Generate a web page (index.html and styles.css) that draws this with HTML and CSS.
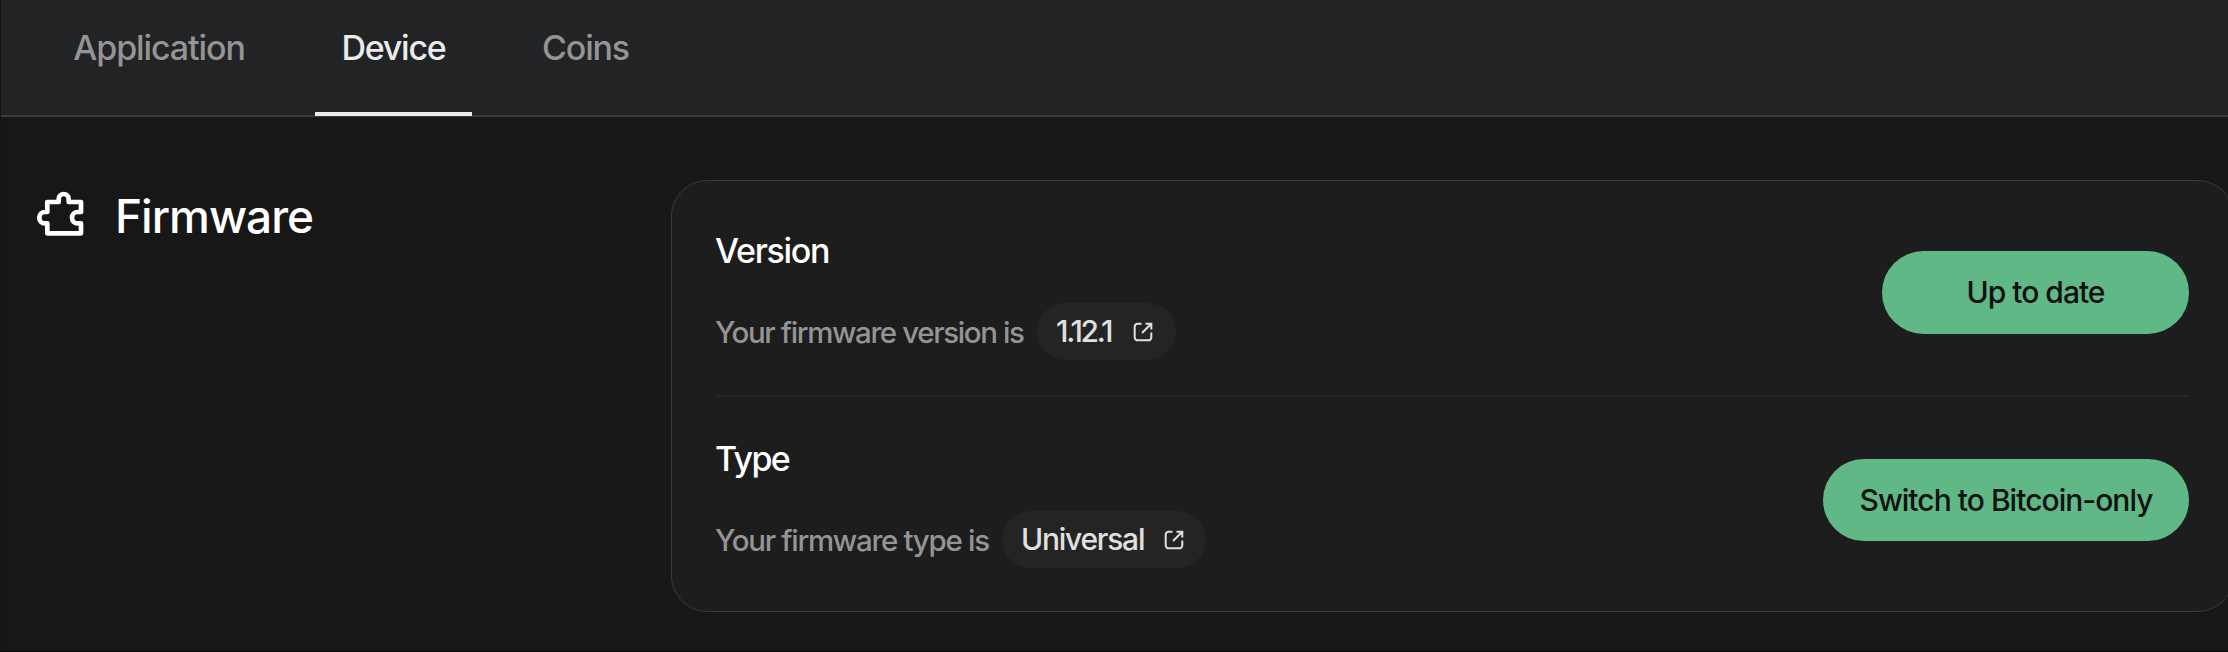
FILE: index.html
```html
<!DOCTYPE html>
<html lang="en">
<head>
<meta charset="utf-8">
<title>Device settings</title>
<link rel="stylesheet" href="styles.css">
</head>
<body>
<nav class="tabs">
  <a class="tab tab-application"><span>Application</span></a>
  <a class="tab tab-device active"><span>Device</span></a>
  <a class="tab tab-coins"><span>Coins</span></a>
</nav>
<main class="section">
  <h2 class="section-title">
    <svg class="puzzle" viewBox="0 0 48 46"><path d="M10.300 11H21.700V8a5 5 0 0 1 10 0V11H44V21H40.700a5.700 5.700 0 0 0 0 11.400H44V42.300H10.300V32.400H8A5.700 5.700 0 0 1 8 21H10.300Z"/></svg>
    <span>Firmware</span>
  </h2>
  <div class="card">
    <div class="row">
      <div class="info">
        <h3><span class="name-version">Version</span></h3>
        <p class="line"><span class="desc desc-version">Your firmware version is</span>
          <a class="pill pill-version"><span>1.12.1</span><svg class="external" viewBox="0 0 20 20"><path d="M8.500 1.700H4.700a3 3 0 0 0-3 3V15.300a3 3 0 0 0 3 3H15.300a3 3 0 0 0 3-3V10.600M12.500 1.700H18.300V7.500M18.300 1.700L9 11"/></svg></a></p>
      </div>
      <button class="button button-update"><span>Up to date</span></button>
    </div>
    <div class="row">
      <div class="info">
        <h3><span class="name-type">Type</span></h3>
        <p class="line"><span class="desc desc-type">Your firmware type is</span>
          <a class="pill pill-type"><span>Universal</span><svg class="external" viewBox="0 0 20 20"><path d="M8.500 1.700H4.700a3 3 0 0 0-3 3V15.300a3 3 0 0 0 3 3H15.300a3 3 0 0 0 3-3V10.600M12.500 1.700H18.300V7.500M18.300 1.700L9 11"/></svg></a></p>
      </div>
      <button class="button button-switch"><span>Switch to Bitcoin-only</span></button>
    </div>
  </div>
</main>
</body>
</html>
```
FILE: styles.css
```css
* { box-sizing: border-box; }
body {
  margin: 0;
  height: 652px;
  overflow: hidden;
  background: #171717;
  border-left: 1px solid #141415;
  border-bottom: 1px solid #0e090b;
  color: #fff;
  font-family: Inter, "Liberation Sans", sans-serif;
}
.tabs {
  display: flex;
  gap: 43px;
  height: 117px;
  padding-left: 46px;
  background: #222325;
  border-bottom: 2px solid #3b3b3c;
}
.tab {
  display: flex;
  justify-content: center;
  height: 116px;
  border-bottom: 4px solid transparent;
  color: #949494;
  font-size: 34px;
  line-height: 96px;
  font-weight: 500;
  white-space: nowrap;
}
.tab-application { width: 224px; margin-right: 1px; letter-spacing: -1.100px; }
.tab-device { width: 157px; letter-spacing: -1.300px; }
.tab-coins { width: 141px; letter-spacing: -1.150px; }
.active { color: #ebebeb; border-bottom-color: #ebebeb; }

.section {
  display: grid;
  grid-template-columns: 634px 1563px;
  padding: 63px 0 0 36px;
}
.section-title {
  display: flex;
  align-items: flex-start;
  gap: 30px;
  margin: 0;
  padding-top: 11px;
  font-size: 46px;
  line-height: 50px;
  font-weight: 500;
  letter-spacing: -1px;
}
.puzzle {
  width: 48px;
  height: 46px;
  fill: none;
  stroke: currentColor;
  stroke-width: 4.7;
  stroke-linejoin: round;
}
.card {
  height: 432px;
  padding: 0 44px;
  background: #1d1d1d;
  border: 1px solid #3a3a3a;
  border-radius: 36px;
}
.row {
  display: flex;
  justify-content: space-between;
  align-items: flex-start;
  height: 216px;
  padding-top: 48px;
}
.row:first-child { border-bottom: 2px solid #252525; }
.row + .row { height: 214px; padding-top: 40px; }
.row .button { margin-top: 22px; }
.info { margin-left: -1px; }
h3 {
  margin: 0;
  font-size: 34px;
  line-height: 43px;
  font-weight: 500;
}
.name-version { letter-spacing: -1.300px; }
.name-type { letter-spacing: -1.600px; }
.line {
  display: flex;
  align-items: center;
  gap: 12px;
  height: 57px;
  margin: 31px 0 0;
  font-size: 30px;
  line-height: 57px;
  white-space: nowrap;
}
.desc { color: #949494; font-size: 29.5px; font-weight: 450; line-height: 56px; }
.desc-version { width: 310px; letter-spacing: -1.390px; }
.desc-type { width: 275px; letter-spacing: -1.300px; }
.pill {
  display: flex;
  align-items: center;
  justify-content: space-between;
  height: 57px;
  padding: 0 23px 0 19px;
  border-radius: 29px;
  background: #242424;
  color: #e0e0e0;
  font-weight: 500;
}
.pill-version { width: 139px; letter-spacing: -2.250px; }
.pill-type { width: 204px; padding-right: 22px; letter-spacing: -1.250px; }
.external {
  width: 20px;
  height: 20px;
  fill: none;
  stroke: currentColor;
  stroke-width: 2;
}
.button {
  height: 83px;
  padding: 0;
  border: 0;
  border-radius: 42px;
  background: #60b887;
  color: #111;
  font: 500 30px/80px Inter, "Liberation Sans", sans-serif;
  white-space: nowrap;
}
.button-update { width: 307px; padding-bottom: 2px; letter-spacing: -1px; }
.row .button-switch { width: 366px; height: 82px; padding-bottom: 1px; letter-spacing: -0.970px; }
```
